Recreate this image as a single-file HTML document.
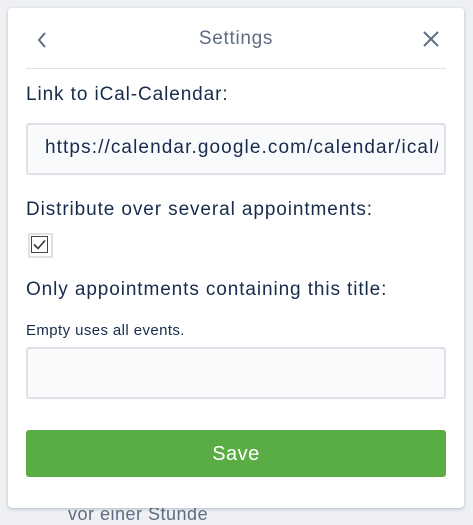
<!DOCTYPE html>
<html><head><style>
html,body{margin:0;padding:0}
body{width:473px;height:515px;background:#eef0f3;position:relative;overflow:hidden;font-family:"Liberation Sans",sans-serif;color:#172b4d}
.bg{position:absolute;left:68px;top:504px;font-size:18px;color:#5e6c84;letter-spacing:.5px}
.card{position:absolute;left:8px;top:8px;width:456px;height:500px;background:#fff;border-radius:4px;box-shadow:0 1px 3px rgba(9,30,66,.25)}
.title{position:absolute;left:0;right:0;top:20px;text-align:center;font-size:19px;color:#5e6c84;letter-spacing:.7px}
.hr{position:absolute;left:18px;width:420px;top:60px;height:1px;background:#dfe1e6}
.lbl{position:absolute;left:18px;font-size:19px;letter-spacing:.9px;white-space:nowrap}
.inp{position:absolute;left:18px;width:416px;height:48px;background:#f9fafc;border:2px solid #dfe1e6;border-radius:3px;overflow:hidden}
.clip{position:absolute;left:17px;right:6px;top:12px;height:26px;overflow:hidden}
.clip span{font-size:19px;letter-spacing:1.1px;white-space:nowrap}
.cb{position:absolute;left:20px;top:225px;width:21px;height:21px;border:2px solid #dfe1e6;background:#fff}
.cb div{position:absolute;left:1px;top:1px;width:17px;height:17px;border:1px solid #444;box-sizing:border-box}
.btn{position:absolute;left:18px;top:422px;width:420px;height:47px;background:#5aac44;border-radius:3px;color:#fff;font-size:20px;text-align:center;line-height:49px;letter-spacing:.5px}
</style></head><body>
<div class="bg">vor einer Stunde</div>
<div class="card">
<svg style="position:absolute;left:27px;top:23px" width="14" height="18" viewBox="0 0 14 18"><path d="M10 2 L4 9 L10 16" fill="none" stroke="#5e6c84" stroke-width="2"/></svg>
<div class="title">Settings</div>
<svg style="position:absolute;left:414px;top:22px" width="18" height="18" viewBox="0 0 18 18"><path d="M2 2 L16 16 M16 2 L2 16" fill="none" stroke="#5e6c84" stroke-width="2"/></svg>
<div class="hr"></div>
<div class="lbl" style="top:76px">Link to iCal-Calendar:</div>
<div class="inp" style="top:115px"><div class="clip"><span>https://calendar.google.com/calendar/ical/</span></div></div>
<div class="lbl" style="top:191px">Distribute over several appointments:</div>
<div class="cb"><div><svg width="15" height="15" viewBox="0 0 15 15" style="position:absolute;left:0;top:0"><path d="M2 7.5 L6 11.5 L13 3.5" fill="none" stroke="#333" stroke-width="1.6"/></svg></div></div>
<div class="lbl" style="top:271px">Only appointments containing this title:</div>
<div class="lbl" style="top:314px;font-size:15px;letter-spacing:.4px">Empty uses all events.</div>
<div class="inp" style="top:339px"></div>
<div class="btn">Save</div>
</div>
</body></html>
